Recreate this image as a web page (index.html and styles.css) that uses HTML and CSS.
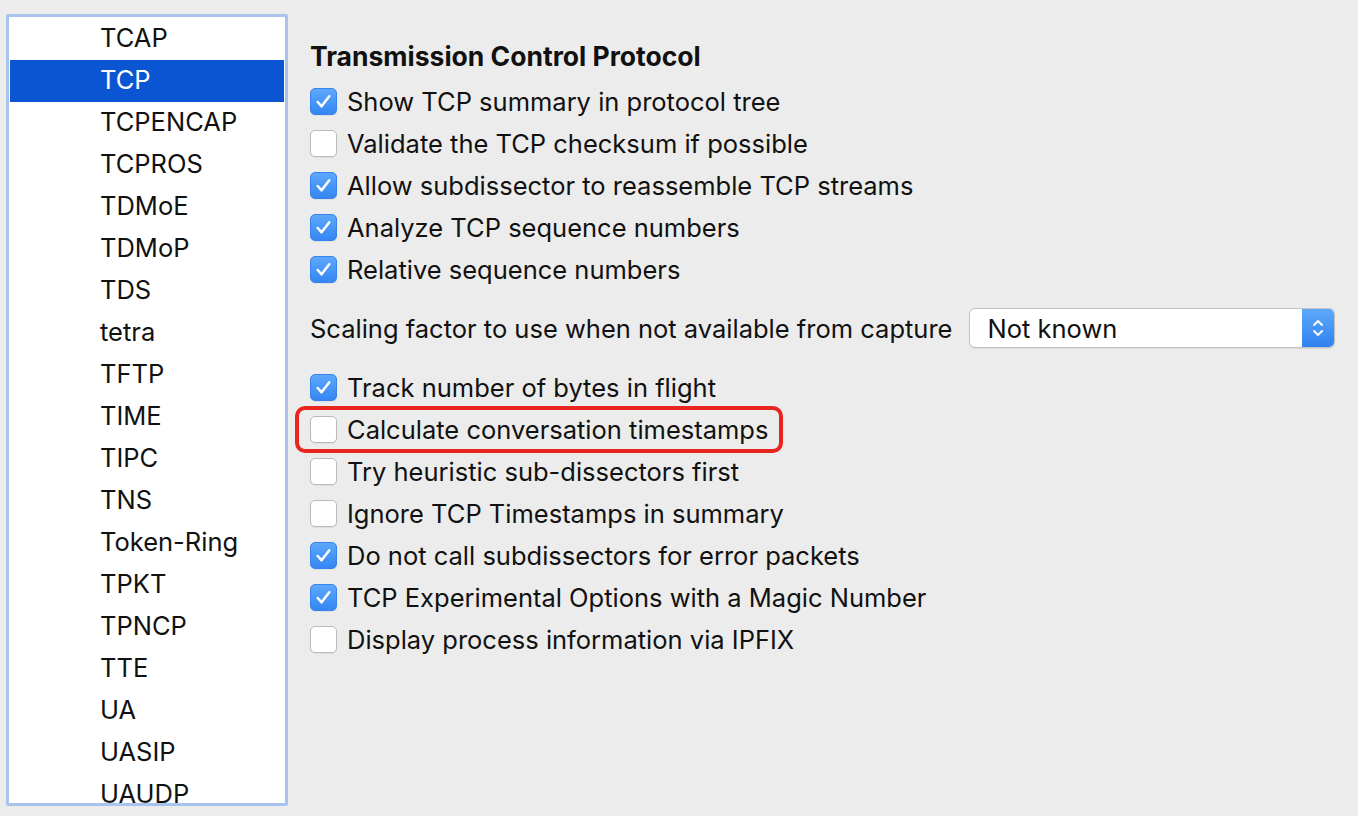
FILE: index.html
```html
<!DOCTYPE html>
<html lang="en">
<head>
    <meta charset="UTF-8">
    <title>Preferences - Protocols</title>
    <link rel="stylesheet" href="styles.css">
</head>
<body>

    <div class="page">
        <div class="proto-list">
            <ul>
                <li>TCAP</li>
                <li class="selected">TCP</li>
                <li>TCPENCAP</li>
                <li>TCPROS</li>
                <li>TDMoE</li>
                <li>TDMoP</li>
                <li>TDS</li>
                <li>tetra</li>
                <li>TFTP</li>
                <li>TIME</li>
                <li>TIPC</li>
                <li>TNS</li>
                <li>Token-Ring</li>
                <li>TPKT</li>
                <li>TPNCP</li>
                <li>TTE</li>
                <li>UA</li>
                <li>UASIP</li>
                <li>UAUDP</li>
            </ul>
        </div>

        <div class="prefs">
            <h2>Transmission Control Protocol</h2>

            <label class="row"><span class="box checked"></span>Show TCP summary in protocol tree</label>
            <label class="row"><span class="box"></span>Validate the TCP checksum if possible</label>
            <label class="row"><span class="box checked"></span>Allow subdissector to reassemble TCP streams</label>
            <label class="row"><span class="box checked"></span>Analyze TCP sequence numbers</label>
            <label class="row"><span class="box checked"></span>Relative sequence numbers</label>

            <div class="select-row">
                <span>Scaling factor to use when not available from capture</span>
                <div class="select">
                    <span class="select-value">Not known</span>
                    <span class="stepper">
                        <svg width="14" height="24" viewBox="0 0 14 24">
                            <path d="M3 9 L7 5 L11 9" />
                            <path d="M3 15 L7 19 L11 15" />
                        </svg>
                    </span>
                </div>
            </div>

            <label class="row"><span class="box checked"></span>Track number of bytes in flight</label>
            <label class="row highlight"><span class="box"></span>Calculate conversation timestamps</label>
            <label class="row"><span class="box"></span>Try heuristic sub-dissectors first</label>
            <label class="row"><span class="box"></span>Ignore TCP Timestamps in summary</label>
            <label class="row"><span class="box checked"></span>Do not call subdissectors for error packets</label>
            <label class="row"><span class="box checked"></span>TCP Experimental Options with a Magic Number</label>
            <label class="row"><span class="box"></span>Display process information via IPFIX</label>
        </div>
    </div>

</body>
</html>
```

FILE: styles.css
```css
body {
    margin: 0;
    padding: 0;
    background-color: #ececec;
    font-family: Inter, "Liberation Sans", Arial, sans-serif;
    font-size: 25.5px;
    color: #111;
    overflow: hidden;
}

.page {
    display: flex;
    align-items: flex-start;
}

/* Lista de protocolos */
.proto-list {
    margin: 14px 0 0 6px;
    width: 276px;
    height: 786px;
    border: 3px solid #a9c4ec;
    border-radius: 2px;
    background-color: white;
    overflow: hidden;
}

.proto-list ul {
    list-style: none;
    margin: 0;
    padding: 1px;
}

.proto-list li {
    height: 40px;
    line-height: 40px;
    padding: 0 0 2px 90px;
    color: #111;
}

.proto-list li.selected {
    background-color: #0b55d2;
    color: white;
}

/* Painel de preferencias */
.prefs {
    margin-left: 22px;
    padding-top: 35px;
    display: flex;
    flex-direction: column;
    align-items: flex-start;
}

.prefs h2 {
    margin: 0 0 3px 0;
    height: 42px;
    line-height: 42px;
    font-size: 26.5px;
    font-weight: bold;
}

.row {
    position: relative;
    display: flex;
    align-items: center;
    gap: 10px;
    height: 42px;
}

.box {
    width: 25px;
    height: 25px;
    border: 1px solid #b9b9b9;
    border-radius: 5px;
    background-color: white;
    box-shadow: 0 1px 1px rgba(0, 0, 0, 0.06);
    flex-shrink: 0;
}

.box.checked {
    border-color: #3583ee;
    background-image: url("data:image/svg+xml,%3Csvg xmlns='http://www.w3.org/2000/svg' viewBox='0 0 26 26'%3E%3Cpath d='M7 13.5 L11 18 L19 7.5' fill='none' stroke='white' stroke-width='2.6' stroke-linecap='round' stroke-linejoin='round'/%3E%3C/svg%3E"), linear-gradient(#5ea8fb, #3486f1);
}

/* Destaque vermelho */
.highlight::after {
    content: "";
    position: absolute;
    top: -2px;
    bottom: -3px;
    left: -15px;
    right: -15px;
    border: 4px solid #e8261f;
    border-radius: 10px;
}

.select-row {
    display: flex;
    align-items: center;
    gap: 17px;
    height: 76px;
}

.select {
    display: flex;
    align-items: center;
    justify-content: space-between;
    width: 364px;
    height: 38px;
    border: 1px solid #c3c3c3;
    border-radius: 6px;
    background-color: white;
    box-shadow: 0 1px 1px rgba(0, 0, 0, 0.08);
    overflow: hidden;
}

.select-value {
    padding-left: 17px;
}

.stepper {
    width: 32px;
    height: 100%;
    display: flex;
    align-items: center;
    justify-content: center;
    background: linear-gradient(#5ea8fb, #2f82ef);
}

.stepper path {
    fill: none;
    stroke: white;
    stroke-width: 2;
    stroke-linecap: round;
    stroke-linejoin: round;
}
```
